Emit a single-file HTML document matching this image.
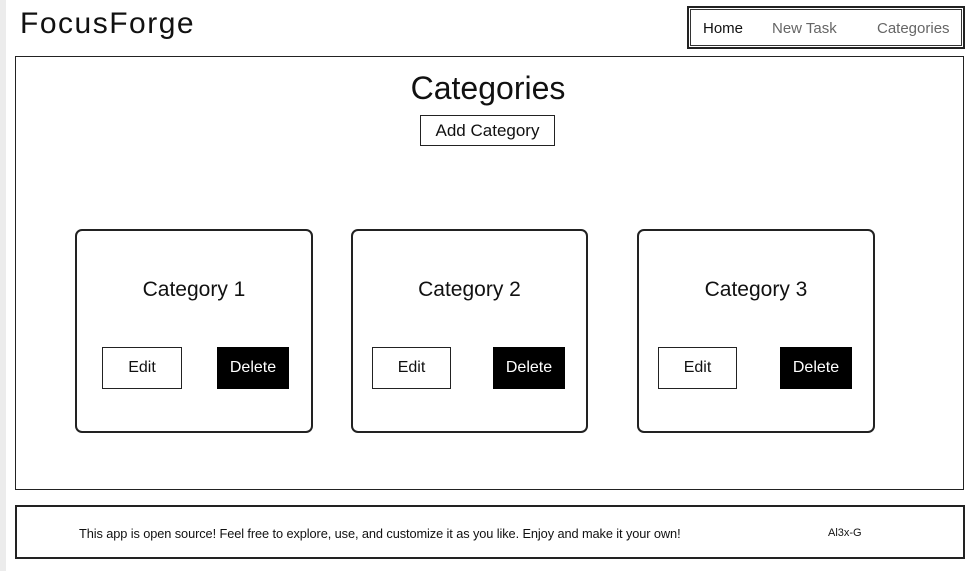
<!DOCTYPE html>
<html><head><meta charset="utf-8"><style>
body{margin:0;width:980px;height:571px;background:#fff;position:relative;overflow:hidden;font-family:"Liberation Sans",sans-serif;color:#111}
.strip{position:absolute;left:0;top:0;width:6px;height:571px;background:#ececec}
.a{position:absolute;box-sizing:border-box}
.box{border:1.5px solid #222}
.c{display:flex;align-items:center;justify-content:center}
</style></head><body>
<div class="strip"></div>
<div class="a" style="left:20px;top:7px;font-size:30px;letter-spacing:1.5px">FocusForge</div>
<div class="a box" style="left:687px;top:6px;width:278px;height:43px;border-width:2px"></div>
<div class="a" style="left:690px;top:9px;width:272px;height:37px;border:1px solid #333"></div>
<div class="a" style="left:703px;top:20px;font-size:15px;color:#111">Home</div>
<div class="a" style="left:772px;top:20px;font-size:15px;color:#666">New Task</div>
<div class="a" style="left:877px;top:20px;font-size:15px;color:#666">Categories</div>
<div class="a box" style="left:15px;top:56px;width:949px;height:434px"></div>
<div class="a c" style="left:15px;top:68px;width:946px;height:40px;font-size:32px">Categories</div>
<div class="a box c" style="left:420px;top:115px;width:135px;height:31px;font-size:17px">Add Category</div>

<div class="a box" style="left:75px;top:229px;width:238px;height:204px;border-radius:7px;border-width:2px"></div>
<div class="a c" style="left:75px;top:276px;width:238px;height:28px;font-size:21px">Category 1</div>
<div class="a box c" style="left:102px;top:347px;width:80px;height:42px;font-size:16px">Edit</div>
<div class="a c" style="left:217px;top:347px;width:72px;height:42px;background:#000;color:#fff;font-size:16px">Delete</div>

<div class="a box" style="left:351px;top:229px;width:237px;height:204px;border-radius:7px;border-width:2px"></div>
<div class="a c" style="left:351px;top:276px;width:237px;height:28px;font-size:21px">Category 2</div>
<div class="a box c" style="left:372px;top:347px;width:79px;height:42px;font-size:16px">Edit</div>
<div class="a c" style="left:493px;top:347px;width:72px;height:42px;background:#000;color:#fff;font-size:16px">Delete</div>

<div class="a box" style="left:637px;top:229px;width:238px;height:204px;border-radius:7px;border-width:2px"></div>
<div class="a c" style="left:637px;top:276px;width:238px;height:28px;font-size:21px">Category 3</div>
<div class="a box c" style="left:658px;top:347px;width:79px;height:42px;font-size:16px">Edit</div>
<div class="a c" style="left:780px;top:347px;width:72px;height:42px;background:#000;color:#fff;font-size:16px">Delete</div>

<div class="a box" style="left:15px;top:505px;width:950px;height:54px;border-width:2px"></div>
<div class="a" style="left:79px;top:526px;font-size:12.8px;white-space:nowrap;letter-spacing:-0.1px">This app is open source! Feel free to explore, use, and customize it as you like. Enjoy and make it your own!</div>
<div class="a" style="left:828px;top:527px;font-size:11px">Al3x-G</div>
</body></html>
